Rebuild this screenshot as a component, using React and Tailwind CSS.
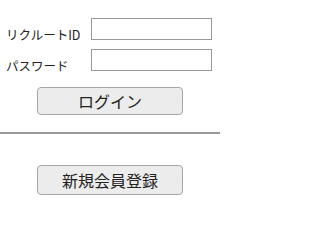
import React from 'react';

const FONT = { fontFamily: '"Noto Sans CJK JP", "Noto Sans", sans-serif' };

const Field = ({ label, type = 'text' }) => (
  <div className="flex items-end h-[22px]">
    <label className="w-[91px] pl-[6px] text-[12.5px] leading-[12px] text-[#222] -mb-[1px]">{label}</label>
    <input
      type={type}
      className="w-[121px] h-[22px] border border-[#999] bg-white outline-none"
    />
  </div>
);

export default function App() {
  return (
    <div className="w-[220px] h-[214px] bg-white" style={FONT}>
      <div className="pt-[18px] flex flex-col gap-[9px]">
        <Field label="リクルートID" />
        <Field label="パスワード" type="password" />
      </div>
      <div className="flex justify-center mt-[16px]">
        <button className="w-[146px] h-[28px] rounded-[4px] border border-[#a6a6a6] bg-[#ececec] text-[16px] text-[#222] leading-none">
          ログイン
        </button>
      </div>
      <div className="mt-[17px] h-[2px] bg-[#999]" />
      <div className="flex justify-center mt-[31px]">
        <button className="w-[146px] h-[30px] rounded-[4px] border border-[#a6a6a6] bg-[#ececec] text-[16px] text-[#222] leading-none">
          新規会員登録
        </button>
      </div>
    </div>
  );
}
